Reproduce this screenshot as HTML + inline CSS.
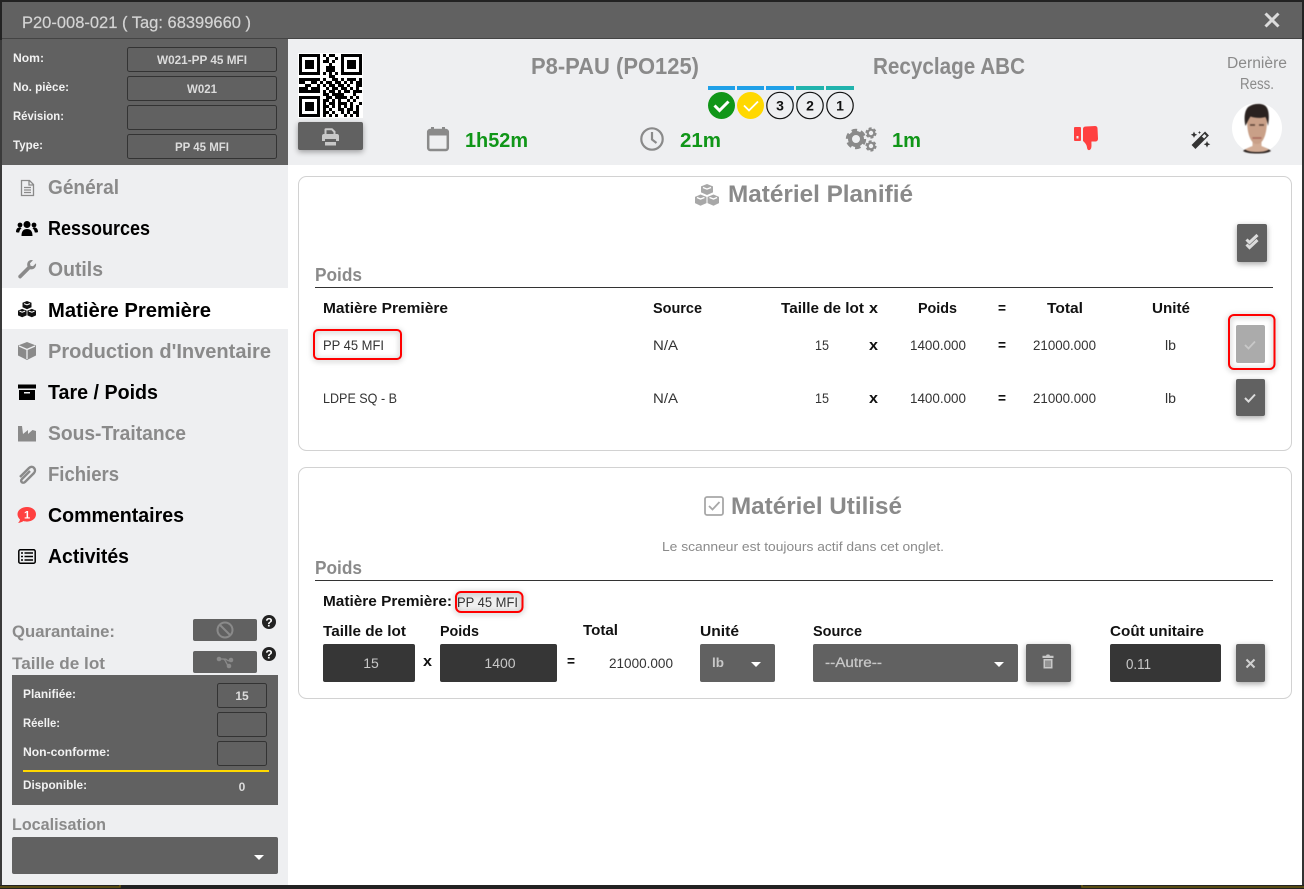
<!DOCTYPE html>
<html lang="fr">
<head>
<meta charset="utf-8">
<title>P20-008-021</title>
<style>
html,body{margin:0;padding:0;width:1304px;height:889px;overflow:hidden;background:#222}
svg{display:block}
text{font-family:"Liberation Sans",Arial,sans-serif;white-space:pre}
.b{font-weight:700}
.g{fill:#8a8a8a}
.k{fill:#000}
.n{font-size:20.5px;font-weight:700}
.l{font-size:12px;font-weight:700;fill:#f2f2f2}
.v{font-size:12px;font-weight:700;fill:#dcdcdc}
.h{font-size:15px;font-weight:700;fill:#111}
.c{font-size:14px;fill:#333}
.sh{filter:drop-shadow(0 2px 3px rgba(0,0,0,.35))}
.red{fill:none;stroke:#f00;stroke-width:2;filter:drop-shadow(0 1px 3px rgba(0,0,0,.35))}
</style>
</head>
<body>
<svg width="1304" height="889" viewBox="0 0 1304 889" xmlns="http://www.w3.org/2000/svg">
<defs>
<g id="cubes">
  <path d="M12 0l6 2.400v6L12 11 6 8.400v-6z M5.500 10.500l6 2.400v6.200l-6 2.600-5.500-2.600v-6.200z M18.500 10.500l5.500 2.400v6.200l-5.500 2.600-6-2.600v-6.200z" fill="currentColor"/>
  <path d="M8 3.500l4 1.600 4-1.600 M2 13.500l3.500 1.500 4-1.500 M14.500 13.500l4 1.500 3.500-1.500" fill="none" stroke="#fff" stroke-width="1.300"/>
</g>
<g id="gear">
  <circle r="6" fill="none" stroke="#8a8a8a" stroke-width="4"/>
  <circle r="8.500" fill="none" stroke="#8a8a8a" stroke-width="3.400" stroke-dasharray="5.300 3.600"/>
</g>
<path id="finder" fill-rule="evenodd" d="M0 0h7v7H0z M1 1v5h5V1z M2 2h3v3H2z"/>
</defs>

<!-- outside -->
<rect width="1304" height="889" fill="#222"/>
<rect x="0" y="40" width="2" height="845" fill="#3a3a3a"/>
<rect x="1302" y="40" width="2" height="845" fill="#333"/>
<path d="M0 887H120V885 M1082 885v2H1304" fill="none" stroke="#6b5a10" stroke-width="1.500"/>

<!-- modal -->
<rect x="2" y="2" width="1300" height="883" fill="#fff"/>
<rect x="2" y="2" width="1300" height="36" fill="#616161"/>
<rect x="2" y="38" width="1300" height="1" fill="#444"/>
<text x="22" y="28" font-size="17" fill="#d4d4d4" stroke="#d4d4d4" stroke-width=".2" textLength="229" lengthAdjust="spacingAndGlyphs">P20-008-021 ( Tag: 68399660 )</text>
<path d="M1265.500 13.500l13 13m0-13l-13 13" stroke="#dcdcdc" stroke-width="3" fill="none"/>

<!-- left header -->
<rect x="2" y="39" width="286" height="126" fill="#616161"/>
<text class="l" x="13" y="62" textLength="31" lengthAdjust="spacingAndGlyphs">Nom:</text>
<text class="l" x="13" y="91" textLength="56" lengthAdjust="spacingAndGlyphs">No. pièce:</text>
<text class="l" x="13" y="120" textLength="51" lengthAdjust="spacingAndGlyphs">Révision:</text>
<text class="l" x="13" y="149" textLength="30" lengthAdjust="spacingAndGlyphs">Type:</text>
<g fill="none" stroke="#333">
<rect x="127.500" y="47.500" width="149" height="24" rx="2"/>
<rect x="127.500" y="76.500" width="149" height="24" rx="2"/>
<rect x="127.500" y="105.500" width="149" height="24" rx="2"/>
<rect x="127.500" y="134.500" width="149" height="24" rx="2"/>
</g>
<text class="v" x="157" y="64" textLength="90" lengthAdjust="spacingAndGlyphs">W021-PP 45 MFI</text>
<text class="v" x="187" y="93" textLength="30" lengthAdjust="spacingAndGlyphs">W021</text>
<text class="v" x="175" y="151" textLength="54" lengthAdjust="spacingAndGlyphs">PP 45 MFI</text>

<!-- sidebar -->
<rect x="2" y="165" width="286" height="720" fill="#eeeff1"/>
<rect x="2" y="288" width="286" height="41" fill="#fff"/>

<path d="M21.500 180.500h8l4 4v11h-12z M29 181v4h4 M24 187.500h7 M24 190h7 M24 192.500h7" fill="none" stroke="#8a8a8a" stroke-width="1.300"/>
<text class="n g" x="48" y="194" textLength="71" lengthAdjust="spacingAndGlyphs">Général</text>

<g fill="#000">
<circle cx="27" cy="224.500" r="3.500"/><circle cx="20" cy="225" r="2.400"/><circle cx="34" cy="225" r="2.400"/>
<path d="M21.500 236c0-5 2-7 5.500-7s5.500 2 5.500 7z M16 232c0-3 1.500-4.500 3.500-4.500 1 0 1.500.3 2 .7-1.300 1-2 2.300-2.300 4.300H17zM38 232c0-3-1.500-4.500-3.500-4.500-1 0-1.500.3-2 .7 1.300 1 2 2.300 2.300 4.300H37z"/>
</g>
<text class="n k" x="48" y="235" textLength="102" lengthAdjust="spacingAndGlyphs">Ressources</text>

<path d="M18.500 275.500l9-9c-1-3 .5-6.500 4-6.500l1.500.2-3 3 .5 2.500 2.500.5 3-3c.7 3.500-2 7-6 6l-9 9c-1.500 1-3.500-1-2.500-2.700z" fill="#8a8a8a"/>
<text class="n g" x="48" y="276" textLength="55" lengthAdjust="spacingAndGlyphs">Outils</text>

<use href="#cubes" transform="translate(18 301) scale(.75)" color="#111"/>
<text class="n k" x="48" y="317" textLength="163" lengthAdjust="spacingAndGlyphs">Matière Première</text>

<path d="M27 342l9 3.500v10L27 360l-9-4.500v-10z" fill="#8a8a8a"/>
<path d="M19 346l8 3.500 8-3.500 M27 349.500V359" fill="none" stroke="#eeeff1" stroke-width="1.300"/>
<text class="n g" x="48" y="358" textLength="223" lengthAdjust="spacingAndGlyphs">Production d'Inventaire</text>

<path d="M18 384.500h18v4H18z M19 390h16v10H19z" fill="#000"/>
<rect x="24" y="392" width="6" height="1.500" fill="#eeeff1"/>
<text class="n k" x="48" y="399" textLength="110" lengthAdjust="spacingAndGlyphs">Tare / Poids</text>

<path d="M18 426h4l1 8 5-4v4l4.500-4 3.500 1v10.500H18z" fill="#8a8a8a"/>
<text class="n g" x="48" y="440" textLength="138" lengthAdjust="spacingAndGlyphs">Sous-Traitance</text>

<path d="M30 472l-8 8c-2.500 2.500 1 5 3 3l9-9c3-3.500-1.500-8.500-5-5l-9 9" fill="none" stroke="#8a8a8a" stroke-width="2.400" transform="translate(0 -1)"/>
<text class="n g" x="48" y="481" textLength="71" lengthAdjust="spacingAndGlyphs">Fichiers</text>

<path d="M27 507c5 0 9 3 9 7.300s-4 7.300-9 7.300c-1.500 0-2.500-.2-3.500-.6-1.500 1-3.500 1.800-5.500 2 1-1 1.800-2.200 2-3.500-1.500-1.300-2.500-3.200-2.500-5.200 0-4.300 4.500-7.300 9.500-7.300z" fill="#ff4040"/>
<text x="27" y="518.500" font-size="11" class="b" fill="#fff" text-anchor="middle">1</text>
<text class="n k" x="48" y="522" textLength="136" lengthAdjust="spacingAndGlyphs">Commentaires</text>

<rect x="18.800" y="549.800" width="16.400" height="13.400" rx="1.500" fill="none" stroke="#000" stroke-width="1.500"/>
<path d="M21 553h2m1.500 0H33 M21 556.500h2m1.500 0H33 M21 560h2m1.500 0H33" stroke="#000" stroke-width="1.500" fill="none"/>
<text class="n k" x="48" y="563" textLength="81" lengthAdjust="spacingAndGlyphs">Activités</text>

<!-- sidebar bottom -->
<text class="b g" font-size="17" x="12" y="637" textLength="103" lengthAdjust="spacingAndGlyphs">Quarantaine:</text>
<rect x="193" y="619" width="64" height="22" rx="2" fill="#616161"/>
<circle cx="225" cy="630" r="7.500" fill="none" stroke="#8a8a8a" stroke-width="2"/>
<path d="M220 625l10 10" stroke="#8a8a8a" stroke-width="2"/>
<circle cx="269" cy="622" r="7" fill="#222"/>
<text x="269" y="626.500" font-size="12" class="b" fill="#fff" text-anchor="middle">?</text>
<text class="b g" font-size="17" x="12" y="669" textLength="93" lengthAdjust="spacingAndGlyphs">Taille de lot</text>
<rect x="193" y="651" width="64" height="22" rx="2" fill="#616161"/>
<path d="M219 659h4c3 0 3 0 4 1 1 .8 1.500 1 4 1 M223 659c3 0 3 6 6 7" fill="none" stroke="#8a8a8a" stroke-width="1.300"/>
<circle cx="219" cy="659" r="2.300" fill="#8a8a8a"/><circle cx="231" cy="660" r="2.300" fill="#8a8a8a"/><circle cx="229" cy="666" r="2.300" fill="#8a8a8a"/>
<circle cx="269" cy="654" r="7" fill="#222"/>
<text x="269" y="658.500" font-size="12" class="b" fill="#fff" text-anchor="middle">?</text>

<rect x="12" y="675" width="266" height="130" fill="#616161"/>
<text class="l" x="23" y="698" textLength="53" lengthAdjust="spacingAndGlyphs">Planifiée:</text>
<text class="l" x="23" y="727" textLength="37" lengthAdjust="spacingAndGlyphs">Réelle:</text>
<text class="l" x="23" y="756" textLength="87" lengthAdjust="spacingAndGlyphs">Non-conforme:</text>
<text class="l" x="23" y="789" textLength="64" lengthAdjust="spacingAndGlyphs">Disponible:</text>
<g fill="none" stroke="#333">
<rect x="217.500" y="683.500" width="49" height="24" rx="2"/>
<rect x="217.500" y="712.500" width="49" height="24" rx="2"/>
<rect x="217.500" y="741.500" width="49" height="24" rx="2"/>
</g>
<text class="v" x="242" y="700" text-anchor="middle">15</text>
<text class="v" x="242" y="791" text-anchor="middle">0</text>
<rect x="23" y="770" width="246" height="2" fill="#ffd800"/>
<text class="b g" font-size="17" x="12" y="830" textLength="94" lengthAdjust="spacingAndGlyphs">Localisation</text>
<rect x="12" y="837" width="266" height="37" rx="2" fill="#616161"/>
<path d="M254 855h10l-5 5z" fill="#fff"/>

<!-- top header -->
<rect x="288" y="39" width="1014" height="126" fill="#eeeff1"/>

<!-- QR -->
<rect x="298" y="53" width="65" height="65" fill="#fff"/>
<g transform="translate(299 54) scale(3)" fill="#000">
<use href="#finder"/><use href="#finder" x="14"/><use href="#finder" y="14"/>
<path fill="none" stroke="#000" d="M8 .5h1M10 .5h2
M9 1.500h1M12 1.500h1
M8 2.500h2M11 2.500h1
M10 3.500h1
M9 4.500h3
M9 5.500h3
M8 6.500h1M10 6.500h1M12 6.500h1
M10 7.500h2
M0 8.500h7M8 8.500h1M11 8.500h2M14 8.500h1M16 8.500h3M20 8.500h1
M0 9.500h2M4 9.500h2M7 9.500h1M9 9.500h2M12 9.500h2M15 9.500h1M17 9.500h1M19 9.500h2
M2 10.500h2M6 10.500h1M8 10.500h1M10 10.500h2M13 10.500h2M16 10.500h1M19 10.500h2
M0 11.500h3M4 11.500h3M9 11.500h1M11 11.500h2M14 11.500h2M17 11.500h1M19 11.500h1
M0 12.500h7M8 12.500h1M10 12.500h2M13 12.500h1M15 12.500h2M18 12.500h3
M8 13.500h2M11 13.500h4M18 13.500h1
M9 14.500h2M12 14.500h4M17 14.500h1M19 14.500h1
M8 15.500h2M11 15.500h1M13 15.500h1M16 15.500h1M18 15.500h1
M8 16.500h1M10 16.500h2M13 16.500h3M17 16.500h1M20 16.500h1
M8 17.500h2M11 17.500h1M13 17.500h1M15 17.500h1M17 17.500h1M19 17.500h1
M8 18.500h1M10 18.500h1M13 18.500h2M16 18.500h2M19 18.500h1
M8 19.500h2M11 19.500h1M14 19.500h1M16 19.500h1M18 19.500h2
M8 20.500h1M10 20.500h1M12 20.500h1M15 20.500h1M17 20.500h1M19 20.500h1"/>
</g>
<rect class="sh" x="298" y="122" width="65" height="28" rx="2" fill="#616161"/>
<path d="M324.500 134v-4.500c0-.8.500-1.300 1.300-1.300h6.500l3.200 3.200V134h-2v-1.800l-2-2h-5v3.800z M322 136c0-1.200.8-2 2-2h13c1.200 0 2 .8 2 2v5h-17z M325 142h11v3.500h-11z" fill="#c8c8c8"/>
<rect x="325" y="139" width="11" height="2.500" fill="#616161"/>

<text class="b g" font-size="23" x="531" y="74" textLength="168" lengthAdjust="spacingAndGlyphs">P8-PAU (PO125)</text>
<text class="b g" font-size="23" x="873" y="74" textLength="152" lengthAdjust="spacingAndGlyphs">Recyclage ABC</text>

<!-- stage -->
<g fill="#1fa0e8">
<rect x="708" y="86" width="27" height="4"/><rect x="737" y="86" width="27" height="4"/><rect x="766" y="86" width="28" height="4"/>
</g>
<g fill="#21b3ad">
<rect x="796" y="86" width="28" height="4"/><rect x="826" y="86" width="28" height="4"/>
</g>
<circle cx="721.500" cy="105.500" r="13.500" fill="#109618"/>
<path d="M714.500 105.500l5 5 9-9" fill="none" stroke="#fff" stroke-width="3"/>
<circle cx="750.500" cy="105.500" r="13.500" fill="#ffd800"/>
<path d="M744 105.500l5 5 9-9" fill="none" stroke="#fff" stroke-width="1.800"/>
<g fill="none" stroke="#111" stroke-width="1.200">
<circle cx="780" cy="105.500" r="13.200"/><circle cx="810" cy="105.500" r="13.200"/><circle cx="840" cy="105.500" r="13.200"/>
</g>
<g class="b" font-size="14" fill="#111" text-anchor="middle">
<text x="780" y="110.500">3</text><text x="810" y="110.500">2</text><text x="840" y="110.500">1</text>
</g>

<!-- stats -->
<rect x="428.200" y="130" width="19.600" height="20" rx="2" fill="none" stroke="#8a8a8a" stroke-width="2.500"/>
<path d="M428 130h20v5.500h-20z M431 127h3v4h-3z M442 127h3v4h-3z" fill="#8a8a8a"/>
<text class="b" font-size="20" fill="#109618" x="465" y="147" textLength="63" lengthAdjust="spacingAndGlyphs">1h52m</text>
<circle cx="652" cy="139" r="10.700" fill="none" stroke="#8a8a8a" stroke-width="2.200"/>
<path d="M652 132v7.500l4.500 3.500" fill="none" stroke="#8a8a8a" stroke-width="2.200"/>
<text class="b" font-size="20" fill="#109618" x="680" y="147" textLength="41" lengthAdjust="spacingAndGlyphs">21m</text>
<use href="#gear" transform="translate(856 139)"/>
<use href="#gear" transform="translate(871 133) scale(.55)"/>
<use href="#gear" transform="translate(871 146) scale(.55)"/>
<text class="b" font-size="20" fill="#109618" x="892" y="147" textLength="29" lengthAdjust="spacingAndGlyphs">1m</text>

<!-- thumb -->
<rect x="1074" y="127" width="7" height="14" rx="1" fill="#ff4040"/>
<rect x="1076.500" y="136" width="2" height="2.500" fill="#eeeff1"/>
<path d="M1083 129c0-1.500 1-2.500 3-2.500l9-.5c1.500 0 2.500 1 2.500 2.500l.5 10c0 2-1 3-3 3h-3.500c-.2 2 .2 4-.2 6-.3 2-1.800 3-3 2.500-1.500-.7-1-3-2-5-.7-1.500-2-3-3.300-4z" fill="#ff4040"/>

<!-- wand -->
<path d="M1193.500 147l13.500-13.500" stroke="#333" stroke-width="5.500" fill="none"/>
<path d="M1203 137.500l2.500-2.500" stroke="#eeeff1" stroke-width="3" fill="none"/>
<path d="M1194 131.500l1 2.200 2.200 1-2.200 1-1 2.200-1-2.200-2.200-1 2.200-1z M1207 141l1 2.300 2.300 1-2.300 1-1 2.300-1-2.300-2.300-1 2.300-1z M1199.500 131l.5 1 1 .5-1 .5-.5 1-.5-1-1-.5 1-.5z" fill="#333"/>

<text font-size="15.500" class="g" x="1227" y="68" textLength="60" lengthAdjust="spacingAndGlyphs">Dernière</text>
<text font-size="15.500" class="g" x="1240" y="89" textLength="34" lengthAdjust="spacingAndGlyphs">Ress.</text>

<!-- avatar -->
<circle cx="1257" cy="128" r="25" fill="#fff"/>
<g style="filter:blur(.6px)">
<path d="M1243 151c2-2 6-3 8-4h12c3 1 6 2 8 4-3 2-8 2.500-14 2.500s-11-.5-14-2.500z" fill="#2b2320"/>
<path d="M1245 149.500c2-1.500 5-2.500 7.500-3.500v-5h9v5c2.500 1 5 2 7.500 3.500-3 2-7 2.500-12 2.500s-9-.5-12-2.500z" fill="#d2ac95"/>
<path d="M1247 120c0 12 3 24 10 24s10-12 10-24-20-12-20 0z" fill="#c9a088"/>
<path d="M1245.500 126c-2-9-.5-17 3.500-19.500 5-3.500 14-3.500 17 0 3 3 3.500 11 2 19.500-.5-3-1-6-2.500-9-5 1.500-10.500 1-15-.5-2 3-3.500 6-5 9.500z" fill="#2a2220"/>
<path d="M1250 125h5M1259 125h5" stroke="#5a4236" stroke-width="1.500"/>
<path d="M1252.500 138h9" stroke="#a8685c" stroke-width="1.500"/>
</g>

<!-- panel 1 -->
<rect x="298.500" y="176.500" width="993" height="274" rx="8" fill="#fff" stroke="#d2d2d2"/>
<use href="#cubes" transform="translate(695 184)" color="#a8a8a8"/>
<text class="b g" font-size="24" x="728" y="202" textLength="185" lengthAdjust="spacingAndGlyphs">Matériel Planifié</text>
<rect class="sh" x="1237" y="224" width="30" height="38" rx="2" fill="#616161"/>
<path d="M1246.500 239.500l3 3 8-7.500 M1246.500 244.500l3 3 8-7.500" fill="none" stroke="#dcdcdc" stroke-width="3"/>
<text class="b g" font-size="18" x="315" y="281" textLength="47" lengthAdjust="spacingAndGlyphs">Poids</text>
<rect x="315" y="287" width="958" height="1" fill="#333"/>

<text class="h" x="323" y="313" textLength="125" lengthAdjust="spacingAndGlyphs">Matière Première</text>
<text class="h" x="653" y="313" textLength="49" lengthAdjust="spacingAndGlyphs">Source</text>
<text class="h" x="781" y="313" textLength="83" lengthAdjust="spacingAndGlyphs">Taille de lot</text>
<text class="h" x="869" y="313" textLength="9" lengthAdjust="spacingAndGlyphs">x</text>
<text class="h" x="918" y="313" textLength="39" lengthAdjust="spacingAndGlyphs">Poids</text>
<text class="h" x="998" y="313" textLength="8" lengthAdjust="spacingAndGlyphs">=</text>
<text class="h" x="1047" y="313" textLength="36" lengthAdjust="spacingAndGlyphs">Total</text>
<text class="h" x="1152" y="313" textLength="38" lengthAdjust="spacingAndGlyphs">Unité</text>

<text class="c" x="323" y="350" textLength="61" lengthAdjust="spacingAndGlyphs">PP 45 MFI</text>
<text class="c" x="653" y="350" textLength="25" lengthAdjust="spacingAndGlyphs">N/A</text>
<text class="c" x="815" y="350" textLength="14" lengthAdjust="spacingAndGlyphs">15</text>
<text class="h" x="869" y="350" textLength="9" lengthAdjust="spacingAndGlyphs">x</text>
<text class="c" x="910" y="350" textLength="56" lengthAdjust="spacingAndGlyphs">1400.000</text>
<text class="h" x="998" y="350" textLength="8" lengthAdjust="spacingAndGlyphs">=</text>
<text class="c" x="1033" y="350" textLength="63" lengthAdjust="spacingAndGlyphs">21000.000</text>
<text class="c" x="1165" y="350" textLength="11" lengthAdjust="spacingAndGlyphs">lb</text>

<text class="c" x="323" y="403" textLength="74" lengthAdjust="spacingAndGlyphs">LDPE SQ - B</text>
<text class="c" x="653" y="403" textLength="25" lengthAdjust="spacingAndGlyphs">N/A</text>
<text class="c" x="815" y="403" textLength="14" lengthAdjust="spacingAndGlyphs">15</text>
<text class="h" x="869" y="403" textLength="9" lengthAdjust="spacingAndGlyphs">x</text>
<text class="c" x="910" y="403" textLength="56" lengthAdjust="spacingAndGlyphs">1400.000</text>
<text class="h" x="998" y="403" textLength="8" lengthAdjust="spacingAndGlyphs">=</text>
<text class="c" x="1033" y="403" textLength="63" lengthAdjust="spacingAndGlyphs">21000.000</text>
<text class="c" x="1165" y="403" textLength="11" lengthAdjust="spacingAndGlyphs">lb</text>

<rect class="red" x="314" y="330" width="87" height="29" rx="4"/>
<rect class="red" x="1229" y="315" width="45.500" height="54" rx="5"/>
<rect x="1236" y="325" width="29" height="38" rx="2" fill="#ababab"/>
<path d="M1245 345l3.500 3.500 6.500-7" fill="none" stroke="#c8c8c8" stroke-width="1.800"/>
<rect class="sh" x="1236" y="379" width="29" height="37" rx="2" fill="#616161"/>
<path d="M1245 398l3.500 3.500 6.500-7" fill="none" stroke="#dcdcdc" stroke-width="2"/>

<!-- panel 2 -->
<rect x="298.500" y="467.500" width="993" height="231" rx="8" fill="#fff" stroke="#d2d2d2"/>
<rect x="705" y="497" width="18" height="18" rx="2" fill="none" stroke="#a8a8a8" stroke-width="1.800"/>
<path d="M709 506l3.500 3.500 7-7.500" fill="none" stroke="#a8a8a8" stroke-width="1.800"/>
<text class="b g" font-size="24" x="731" y="514" textLength="171" lengthAdjust="spacingAndGlyphs">Matériel Utilisé</text>
<text font-size="13" fill="#8a8a8a" x="662" y="551" textLength="282" lengthAdjust="spacingAndGlyphs">Le scanneur est toujours actif dans cet onglet.</text>
<text class="b g" font-size="18" x="315" y="574" textLength="47" lengthAdjust="spacingAndGlyphs">Poids</text>
<rect x="315" y="580" width="958" height="1" fill="#333"/>
<text class="h" x="323" y="606" textLength="129" lengthAdjust="spacingAndGlyphs">Matière Première:</text>
<rect x="456" y="592" width="66" height="19" rx="4" fill="#f0f0f0"/>
<rect class="red" x="456" y="592" width="66.500" height="20" rx="5"/>
<text class="c" x="457" y="607" textLength="61" lengthAdjust="spacingAndGlyphs">PP 45 MFI</text>

<text class="h" x="323" y="636" textLength="83" lengthAdjust="spacingAndGlyphs">Taille de lot</text>
<text class="h" x="440" y="636" textLength="39" lengthAdjust="spacingAndGlyphs">Poids</text>
<text class="h" x="583" y="635" textLength="35" lengthAdjust="spacingAndGlyphs">Total</text>
<text class="h" x="700" y="636" textLength="39" lengthAdjust="spacingAndGlyphs">Unité</text>
<text class="h" x="813" y="636" textLength="49" lengthAdjust="spacingAndGlyphs">Source</text>
<text class="h" x="1110" y="636" textLength="94" lengthAdjust="spacingAndGlyphs">Coût unitaire</text>

<rect x="323" y="644" width="92" height="38" rx="2" fill="#363636"/>
<text font-size="14" fill="#c8c8c8" x="371" y="668" text-anchor="middle">15</text>
<text class="h" x="423" y="666" textLength="9" lengthAdjust="spacingAndGlyphs">x</text>
<rect x="440" y="644" width="117" height="38" rx="2" fill="#363636"/>
<text font-size="14" fill="#c8c8c8" x="500" y="668" text-anchor="middle">1400</text>
<text class="h" x="567" y="666" textLength="8" lengthAdjust="spacingAndGlyphs">=</text>
<text class="c" x="609" y="668" textLength="64" lengthAdjust="spacingAndGlyphs">21000.000</text>
<rect x="700" y="644" width="75" height="38" rx="2" fill="#616161"/>
<text class="b" font-size="13" fill="#c8c8c8" x="712" y="667" textLength="12" lengthAdjust="spacingAndGlyphs">lb</text>
<path d="M751 662h10l-5 5z" fill="#fff"/>
<rect x="813" y="644" width="205" height="38" rx="2" fill="#616161"/>
<text font-size="13.500" fill="#c8c8c8" x="825" y="667" stroke="#c8c8c8" stroke-width=".25" textLength="57" lengthAdjust="spacingAndGlyphs">--Autre--</text>
<path d="M994 662h10l-5 5z" fill="#fff"/>
<rect class="sh" x="1026" y="644" width="45" height="38" rx="2" fill="#616161"/>
<path d="M1042.500 658h11v-2.200h-3.500l-.8-1.300h-2.400l-.8 1.300h-3.500z M1043.500 659h9v9.500h-9z" fill="#c8c8c8"/>
<path d="M1046 660.500v6.500M1048 660.500v6.500M1050 660.500v6.500" stroke="#616161" fill="none"/>
<rect x="1110" y="644" width="111" height="38" rx="2" fill="#363636"/>
<text font-size="14.500" fill="#c8c8c8" x="1126" y="669" textLength="25" lengthAdjust="spacingAndGlyphs">0.11</text>
<rect class="sh" x="1236" y="644" width="29" height="38" rx="2" fill="#616161"/>
<path d="M1246.500 659.500l8 8m0-8l-8 8" stroke="#d0d0d0" stroke-width="2" fill="none"/>
</svg>
</body>
</html>
